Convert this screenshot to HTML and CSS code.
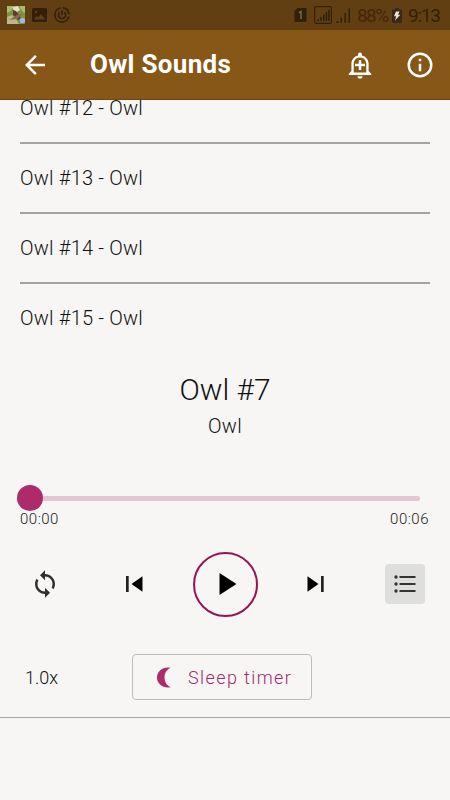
FILE: index.html
```html
<!DOCTYPE html>
<html lang="en">
<head>
<meta charset="utf-8">
<title>Owl Sounds</title>
<link rel="stylesheet" href="styles.css">
</head>
<body>
<div class="status">
  <div class="status-left">
    <svg width="18" height="18" viewBox="0 0 18 18"><rect width="18" height="18" rx="1" fill="#809044"/><path d="M0 0h6L4 5 0 7zM12 0h6v7l-3-2z" fill="#a9bb70"/><path d="M5 1l6-1 2 4-5 3z" fill="#e3dfc7"/><path d="M0 11l5-2 4 4 3 5H0z" fill="#bcb78f"/><path d="M6 4l3 1 5 7-3 2-5-5z" fill="#59402c"/><path d="M2 14l8-5 6-1-6 5z" fill="#886b4a"/><rect x="13" y="12" width="5" height="5" rx="1.5" fill="#9dbce5"/></svg>
    <svg width="15" height="14" viewBox="0 0 15 14"><path fill="#341f09" fill-rule="evenodd" d="M1.5 0h12a1.5 1.5 0 0 1 1.5 1.5v11a1.5 1.5 0 0 1-1.5 1.500h-12A1.5 1.5 0 0 1 0 12.5v-11A1.5 1.5 0 0 1 1.5 0zM2 11.5h11L9 6l-2.500 3.500L4.500 8zM3 3v2h2V3z"/></svg>
    <svg width="16" height="16" viewBox="0 0 16 16" fill="none" stroke="#341f09" stroke-width="1.7"><path d="M6.500 1A7.100 7.100 0 1 0 14.900 9.500M8.800.9a7.100 7.100 0 0 1 6.200 6.200"/><path d="M5.500 5.400a3.600 3.600 0 1 0 5 0M8 3.500V8"/></svg>
  </div>
  <div class="status-right">
    <svg width="13" height="14" viewBox="0 0 13 14"><path d="M3.500 0H11.500a1 1 0 0 1 1 1v12a1 1 0 0 1-1 1h-10a1 1 0 0 1-1-1V3z" fill="#302006"/><path d="M4.800 4.700L7 3.600V11" fill="none" stroke="#7c603a" stroke-width="1.600"/></svg>
    <svg class="sim1" width="18" height="18" viewBox="0 0 18 18"><rect x=".6" y=".6" width="16.800" height="16.800" rx="1.500" fill="none" stroke="#302006" stroke-width="1.100"/><path d="M3 15v-1l2-1v2zM6.200 15v-4h1.500v4zM9 15V8.500h1.500V15zM11.700 15V6h1.500v9zM14.200 15V3.500h1.500V15z" fill="#302006"/></svg>
    <svg class="sim2" width="15" height="15" viewBox="0 0 15 15"><path d="M0 15v-1l2.500-1.500V15zM4.500 15V9.500H6V15zM8.500 15V5H10v10zM12.500 15V.5H14V15z" fill="#302006"/></svg>
    <span class="percent">88%</span>
    <svg class="battery" width="10" height="15" viewBox="0 0 10 15"><path d="M3 0h4v1.500h2a1 1 0 0 1 1 1V14a1 1 0 0 1-1 1H1a1 1 0 0 1-1-1V2.500a1 1 0 0 1 1-1h2z" fill="#38291a"/><path d="M4 3.500h3.500L6 6.800h2.300L3 12.500l1.200-4.200H2z" fill="#eee5d5"/></svg>
    <span class="clock">9:13</span>
  </div>
</div>
<header class="bar">
  <svg class="icon" viewBox="0 0 24 24"><path d="M20 11H7.830l5.590-5.590L12 4l-8 8 8 8 1.410-1.410L7.830 13H20z"/></svg>
  <h1>Owl Sounds</h1>
  <svg class="icon bell" viewBox="0 0 24 24"><path fill-rule="evenodd" d="M10.010 21.010c0 1.100.89 1.990 1.990 1.990s1.990-.89 1.990-1.990zM18.880 16.820V11c0-3.250-2.250-5.970-5.290-6.690v-.72C13.590 2.710 12.880 2 12 2s-1.590.71-1.590 1.590v.72C7.370 5.030 5.120 7.750 5.120 11v5.820L3 18.940V20h18v-1.060zM7 18v-7c0-2.760 2.240-5 5-5s5 2.240 5 5v7z"/><path d="M11 8h2v3h3v2h-3v3h-2v-3H8v-2h3z"/></svg>
  <svg class="icon" viewBox="0 0 24 24"><path fill-rule="evenodd" d="M12 2a10 10 0 1 0 0 20 10 10 0 0 0 0-20zm0 18a8 8 0 1 1 0-16 8 8 0 0 1 0 16z"/><path d="M11 7h2v2h-2zM11 11h2v6h-2z"/></svg>
</header>
<main>
  <div class="list">
    <div class="row">Owl #12 - Owl</div>
    <div class="row">Owl #13 - Owl</div>
    <div class="row">Owl #14 - Owl</div>
    <div class="row">Owl #15 - Owl</div>
  </div>
  <section class="player">
    <h2>Owl #7</h2>
    <p class="artist">Owl</p>
    <div class="slider"><div class="thumb"></div><div class="track"></div></div>
    <div class="times"><span>00:00</span><span>00:06</span></div>
    <div class="controls">
      <svg class="loop" width="30" height="30" viewBox="0 0 24 24" fill="#303030"><path d="M12 4V1L8 5l4 4V6c3.310 0 6 2.690 6 6 0 1.010-.25 1.970-.7 2.800l1.460 1.460C19.540 15.030 20 13.570 20 12c0-4.420-3.580-8-8-8zm0 14c-3.310 0-6-2.690-6-6 0-1.010.25-1.970.7-2.800L5.240 7.740C4.460 8.970 4 10.430 4 12c0 4.420 3.580 8 8 8v3l4-4-4-4z"/></svg>
      <svg width="17" height="16" viewBox="0 0 17 16"><path fill="#222" d="M0 0H2.700v16H0z"/><path d="M16.500.3v15.400L5.500 8z"/></svg>
      <div class="play"><svg width="18" height="22" viewBox="0 0 18 22"><path d="M.5 0v22L17.500 11z"/></svg></div>
      <svg width="17" height="16" viewBox="0 0 17 16"><path fill="#222" d="M14 0h2.700v16H14z"/><path d="M.5.3v15.400L11.500 8z"/></svg>
      <div class="queue"><svg width="22" height="18" viewBox="0 0 22 18" fill="#333"><circle cx="2" cy="2" r="1.700"/><circle cx="2" cy="9" r="1.700"/><circle cx="2" cy="16" r="1.700"/><path d="M5.500 1h16v2h-16zM5.500 8h16v2h-16zM5.500 15h16v2h-16z"/></svg></div>
    </div>
    <div class="extras">
      <span class="speed">1.0x</span>
      <div class="sleep"><svg width="14" height="21" viewBox="0 0 14 21"><path fill="#ad2a6b" d="M13.500.8C7-.8 0 3.500 0 10.500S7 21.800 13.500 20.200C10 18.500 7.500 15 7.500 10.500S10 2.500 13.500.8z"/></svg><span>Sleep timer</span></div>
    </div>
  </section>
</main>
</body>
</html>
```
FILE: styles.css
```css
* { box-sizing: border-box; }
body {
  margin: 0;
  width: 450px;
  height: 800px;
  overflow: hidden;
  background: #f7f6f4;
  color: #111;
  font-family: Roboto, sans-serif;
  font-weight: 300;
}
svg { display: block; flex: none; }
h1, h2, p { margin: 0; }
.status {
  height: 30px;
  padding: 0 10px 0 7px;
  background: #623f12;
  display: flex;
  justify-content: space-between;
  align-items: center;
}
.status-left { display: flex; align-items: center; gap: 7px; }
.status-right { display: flex; align-items: center; color: #302006; }
.sim1 { margin-left: 7px; }
.sim2 { margin-left: 4px; }
.percent { margin-left: 6px; width: 30px; font-size: 19px; font-weight: 400; letter-spacing: -1.6px; color: #422608; }
.battery { margin-left: 5px; }
.clock { margin-left: 6px; width: 32px; font-size: 19px; font-weight: 400; letter-spacing: -1.2px; }
.bar {
  height: 70px;
  padding: 0 15px 0 20px;
  background: #875717;
  border-bottom: 1px solid #704510;
  display: flex;
  align-items: center;
}
.icon { width: 30px; height: 30px; fill: #fff; }
.bar h1 { margin: -2px 0 0 40px; flex: 1; font-size: 26px; font-weight: 700; line-height: 30px; letter-spacing: .3px; color: #fff; }
.bell { margin-right: 30px; }
.list { height: 250px; padding: 0 20px; overflow: hidden; }
.row {
  height: 70px;
  border-bottom: 2px solid #a4a4a3;
  line-height: 69px;
  font-size: 20px;
  letter-spacing: .2px;
}
.row:first-child { margin-top: -26px; }
.row:last-child { border: 0; }
.player { height: 368px; border-bottom: 1px solid #a3a3a3; }
.player h2 { padding-top: 22px; font-size: 30px; font-weight: 300; line-height: 36px; text-align: center; }
.artist { margin-top: 6px; font-size: 20px; line-height: 24px; text-align: center; letter-spacing: .3px; }
.slider { display: flex; align-items: center; margin: 47px 30px 0 17px; height: 26px; }
.thumb { width: 26px; height: 26px; border-radius: 50%; background: #ad2a6b; }
.track { flex: 1; height: 5px; border-radius: 0 3px 3px 0; background: #e4c5d1; }
.times { display: flex; justify-content: space-between; padding: 0 21px 0 20px; font-size: 15px; line-height: 17px; letter-spacing: .5px; color: #222; }
.controls { display: flex; align-items: center; height: 66px; margin-top: 23px; padding: 0 25px 0 30px; }
.loop { margin-right: 66px; }
.play {
  width: 65px;
  height: 65px;
  margin: 0 49px 0 50px;
  padding-left: 4px;
  border: 2px solid #961456;
  border-radius: 50%;
  display: flex;
  align-items: center;
  justify-content: center;
}
.queue {
  width: 40px;
  height: 40px;
  margin-left: auto;
  border-radius: 4px;
  background: #dededc;
  display: flex;
  align-items: center;
  justify-content: center;
}
.extras { display: flex; align-items: center; height: 46px; margin-top: 37px; padding-left: 25px; font-size: 18px; }
.speed { width: 107px; }
.sleep {
  width: 180px;
  height: 46px;
  border: 1px solid #bcbcbc;
  border-radius: 4px;
  padding-left: 24px;
  display: flex;
  align-items: center;
  gap: 17px;
  color: #a02a68;
  letter-spacing: 1.4px;
  white-space: nowrap;
}
```
